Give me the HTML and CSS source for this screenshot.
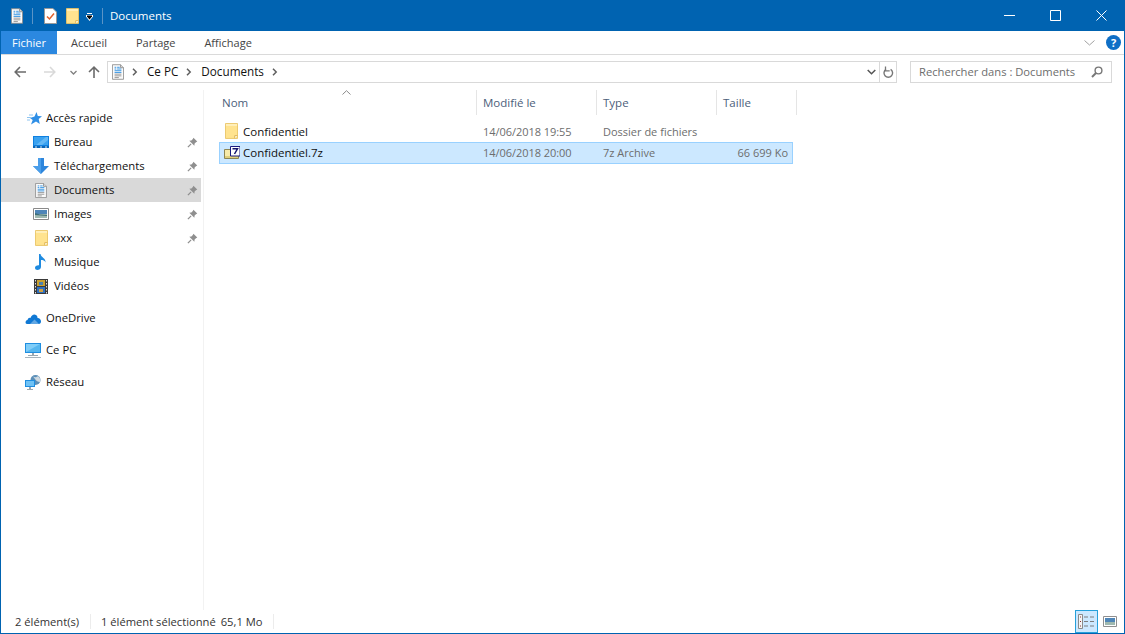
FILE: index.html
```html
<!DOCTYPE html>
<html lang="fr">
<head>
<meta charset="utf-8">
<title>Documents</title>
<link rel="stylesheet" href="styles.css">
</head>
<body>
<svg class="defs" width="0" height="0">
  <defs>
    <symbol id="doc" viewBox="0 0 14 18">
      <path d="M.5.5H10L13.500 4V17.500H.5Z" fill="#fbfbfb" stroke="#8a8a8a"/>
      <path d="M10 .5V4H13.500" fill="#ddd" stroke="#8a8a8a"/>
      <path d="M3 3.500H5M6 3.500H9M6 5.500H11M3 7.500H11M3 9.500H11" stroke="#1e88e0"/>
      <path d="M3 5.500H5" stroke="#1e88e0"/>
      <path d="M3 11.500H11M3 13.500H11M3 15.500H8" stroke="#8c8c8c"/>
    </symbol>
    <symbol id="folder" viewBox="0 0 14 17">
      <path d="M.5.5H13.500V16.500H.5Z" fill="#ffe38f" stroke="#e9c465"/>
      <path d="M1 1H13V3H1Z" fill="#fff0bd"/>
      <path d="M10.500 16.500V13.500H13.500" fill="#fff" stroke="#dcb04c"/>
    </symbol>
    <symbol id="pin" viewBox="0 0 12 12">
      <path d="M7 .8 11.200 5 9.800 5.600 8.300 7.200 8 9.500 2.500 4 4.800 3.700 6.400 2.200Z" fill="#8f8f8f"/>
      <path d="M4.500 7.500 1 11" stroke="#8f8f8f" stroke-width="1.400"/>
    </symbol>
    <symbol id="chev" viewBox="0 0 6 8">
      <path d="M1 .8 4.200 4 1 7.200" fill="none" stroke="#5f5f5f" stroke-width="1.500"/>
    </symbol>
  </defs>
</svg>
<div class="window">
  <header class="titlebar">
    <svg class="qat-doc" width="12" height="16"><use href="#doc"/></svg>
    <span class="qat-sep"></span>
    <svg class="qat-check" width="13" height="16" viewBox="0 0 13 16">
      <path d="M.5.5H9L12.500 4V15.500H.5Z" fill="#fff" stroke="#9a9a9a"/>
      <path d="M3 8.500 5.500 11 10 5.500" fill="none" stroke="#e2602a" stroke-width="1.500"/>
    </svg>
    <svg class="qat-folder" width="13" height="16"><use href="#folder"/></svg>
    <svg class="qat-drop" width="9" height="8" viewBox="0 0 9 8">
      <path d="M2 .5H7" stroke="#fff"/>
      <path d="M1 2H8V3.500L4.500 8 1 3.500Z" fill="#fff"/>
      <path d="M2 2.500H7V3.500L4.500 6.500 2 3.500Z" fill="#000"/>
    </svg>
    <span class="qat-sep second"></span>
    <span class="title">Documents</span>
    <div class="winctl">
      <svg width="11" height="11" viewBox="0 0 11 11"><path d="M0 5.500H11" stroke="#fff"/></svg>
      <svg width="11" height="11" viewBox="0 0 11 11"><path d="M.5.5H10.500V10.500H.5Z" fill="none" stroke="#fff"/></svg>
      <svg width="11" height="11" viewBox="0 0 11 11"><path d="M.5.5 10.500 10.500M10.500.5.500 10.500" stroke="#fff"/></svg>
    </div>
  </header>

  <nav class="ribbon">
    <span class="tab file">Fichier</span>
    <span class="tab t1">Accueil</span>
    <span class="tab t2">Partage</span>
    <span class="tab t3">Affichage</span>
    <svg class="rib-chev" width="11" height="6" viewBox="0 0 11 6"><path d="M.5.500 5.500 5 10.500.5" fill="none" stroke="#a0a0a0"/></svg>
    <span class="help">?</span>
  </nav>

  <div class="addr-row">
    <svg class="nb back" width="12" height="12" viewBox="0 0 12 12"><path d="M6 1 1.200 6 6 11M1.500 6H12" fill="none" stroke="#6b6b6b" stroke-width="1.600"/></svg>
    <svg class="nb fwd" width="12" height="12" viewBox="0 0 12 12"><path d="M6 1 10.800 6 6 11M10.500 6H0" fill="none" stroke="#d9d9d9" stroke-width="1.600"/></svg>
    <svg class="nb more" width="7" height="5" viewBox="0 0 7 5"><path d="M.5 1 3.500 4 6.500 1" fill="none" stroke="#808080" stroke-width="1.300"/></svg>
    <svg class="nb up" width="12" height="12" viewBox="0 0 12 12"><path d="M1 6 6 1.200 11 6M6 1.500V12" fill="none" stroke="#6b6b6b" stroke-width="1.600"/></svg>
    <div class="addr">
      <svg class="addr-doc" width="12" height="16"><use href="#doc"/></svg>
      <svg class="crumb-chev" width="6" height="8"><use href="#chev"/></svg>
      <span class="crumb">Ce PC</span>
      <svg class="crumb-chev" width="6" height="8"><use href="#chev"/></svg>
      <span class="crumb">Documents</span>
      <svg class="crumb-chev" width="6" height="8"><use href="#chev"/></svg>
      <svg class="addr-drop" width="9" height="6" viewBox="0 0 9 6"><path d="M.7 1 4.500 4.800 8.300 1" fill="none" stroke="#555" stroke-width="1.500"/></svg>
      <span class="refresh">
        <svg width="11" height="13" viewBox="0 0 11 13"><path d="M7.600 3.300A4.300 4.300 0 1 1 3 3.300" fill="none" stroke="#777" stroke-width="1.400"/><path d="M2.500 .6V4.800H6.700" fill="none" stroke="#777" stroke-width="1.300"/></svg>
      </span>
    </div>
    <div class="search">
      <span class="search-text">Rechercher dans : Documents</span>
      <svg width="12" height="12" viewBox="0 0 12 12"><circle cx="7.500" cy="4.500" r="3.400" fill="none" stroke="#777" stroke-width="1.400"/><path d="M5 7 1 11" stroke="#777" stroke-width="2"/></svg>
    </div>
  </div>

  <div class="main">
    <aside class="nav">
      <div class="item top">
        <svg class="ic star" width="15" height="13" viewBox="0 0 15 13"><path d="M9.500 0 10.800 4 15 4.300 11.700 7 12.800 12 9 9.400 4 12.500 5.700 8 3 6 7.500 4.500Z" fill="#2f8fe6"/><path d="M2 3H6M0 5.500H4M0 8H3" stroke="#8ec4f0"/></svg>
        <span>Accès rapide</span>
      </div>
      <div class="item sub">
        <svg class="ic" width="16" height="12" viewBox="0 0 16 12"><path d="M0 0H16V10H0Z" fill="#0f80e0"/><path d="M1 1H15V9H1Z" fill="#3aa2f0"/><path d="M3 9 13 1H15V4L9 9Z" fill="#64b8f5"/><path d="M0 10H16V12H0Z" fill="#0a66b8"/><path d="M2 11H4M7 11H9M12 11H14" stroke="#cde6fa"/></svg>
        <span>Bureau</span>
        <svg class="pin" width="11" height="11"><use href="#pin"/></svg>
      </div>
      <div class="item sub">
        <svg class="ic" width="16" height="16" viewBox="0 0 16 16"><path d="M5 0H11V8H16L8 16 0 8H5Z" fill="#2e86dc"/><path d="M5 0H8V16L0 8H5Z" fill="#4a9eea"/></svg>
        <span>Téléchargements</span>
        <svg class="pin" width="11" height="11"><use href="#pin"/></svg>
      </div>
      <div class="item sub active">
        <svg class="ic narrow" width="12" height="15"><use href="#doc"/></svg>
        <span>Documents</span>
        <svg class="pin" width="11" height="11"><use href="#pin"/></svg>
      </div>
      <div class="item sub">
        <svg class="ic" width="16" height="12" viewBox="0 0 16 12"><path d="M.5.5H15.500V11.500H.5Z" fill="#fff" stroke="#8a8a8a"/><path d="M2 2H14V6H2Z" fill="#4f86b8"/><path d="M2 6H14V10H2Z" fill="#9fb9b0"/><path d="M2 5 7 6.500 14 7V8L2 7Z" fill="#3e6f78"/></svg>
        <span>Images</span>
        <svg class="pin" width="11" height="11"><use href="#pin"/></svg>
      </div>
      <div class="item sub">
        <svg class="ic narrow wide13" width="13" height="16"><use href="#folder"/></svg>
        <span>axx</span>
        <svg class="pin" width="11" height="11"><use href="#pin"/></svg>
      </div>
      <div class="item sub">
        <svg class="ic narrow" width="12" height="16" viewBox="0 0 12 16"><path d="M4 0H5.500C6 3.500 11 4 10.500 8.500 9.800 6.500 8 6 6 6V13C6 15 4 16 2.500 16 1 16 0 15 0 13.700 0 12 1.700 11 4 11.200Z" fill="#1f8be0"/></svg>
        <span>Musique</span>
      </div>
      <div class="item sub">
        <svg class="ic narrow wide14" width="14" height="15" viewBox="0 0 14 15"><path d="M0 0H14V15H0Z" fill="#3a3a3a"/><path d="M1 1H2V2.500H1ZM1 4H2V5.500H1ZM1 7H2V8.500H1ZM1 10H2V11.500H1ZM1 13H2V14.500H1ZM12 1H13V2.500H12ZM12 4H13V5.500H12ZM12 7H13V8.500H12ZM12 10H13V11.500H12ZM12 13H13V14.500H12Z" fill="#ddd"/><path d="M3 1H11V7H3Z" fill="#c8a030"/><path d="M3 8H11V14H3Z" fill="#2e6fbf"/><path d="M5 3H9V6H5Z" fill="#4a80b0"/><path d="M5 10H9V13H5Z" fill="#d0a040"/></svg>
        <span>Vidéos</span>
      </div>
      <div class="item top group">
        <svg class="ic" width="16" height="11" viewBox="0 0 16 11"><path d="M2 11C0 11 0 7.500 2.500 7 3 5 4.500 4.500 5.500 5 6.500 2 9 .5 11 2 12.500 3 12.500 4 12.500 5 15 5 16 7 16 8.500 16 10 15 11 14 11Z" fill="#0f78d4"/><path d="M5 11 9.500 6.500 14 11Z" fill="#fff" opacity=".35"/></svg>
        <span>OneDrive</span>
      </div>
      <div class="item top group">
        <svg class="ic" width="16" height="15" viewBox="0 0 16 15"><path d="M0 0H16V10H0Z" fill="#1f8ee0"/><path d="M1 1H15V9H1Z" fill="#7fcdf8"/><path d="M1 9 15 1V9Z" fill="#55b6ef"/><path d="M7 10H9V12H7ZM3 12H13V13H3Z" fill="#9aa7b0"/><path d="M0 14H16V15H0Z" fill="#a8b4bc"/></svg>
        <span>Ce PC</span>
      </div>
      <div class="item top group">
        <svg class="ic" width="16" height="15" viewBox="0 0 16 15"><circle cx="10.500" cy="5" r="5" fill="#5b8fb8"/><path d="M8 1.500C10 3 12 2 13 1 15 3 16 5 15 7 13 7 11 6 10 4Z" fill="#cfd9e0"/><path d="M0 5H10V12H0Z" fill="#1f8ee0"/><path d="M1 6H9V11H1Z" fill="#6fc2f5"/><path d="M4 12H6V14H4ZM2 14H8V15H2Z" fill="#9aa7b0"/></svg>
        <span>Réseau</span>
      </div>
    </aside>

    <section class="content">
      <div class="cols">
        <div class="col c-name">Nom
          <svg class="sort" width="9" height="5" viewBox="0 0 9 5"><path d="M.5 4.500 4.500.7 8.500 4.500" fill="none" stroke="#8a8a8a"/></svg>
        </div>
        <div class="col c-date">Modifié le</div>
        <div class="col c-type">Type</div>
        <div class="col c-size">Taille</div>
      </div>
      <div class="row">
        <div class="cell c-name name">
          <svg class="file-ic folder-ic" width="13" height="16"><use href="#folder"/></svg>
          <span>Confidentiel</span>
        </div>
        <div class="cell c-date">14/06/2018 19:55</div>
        <div class="cell c-type">Dossier de fichiers</div>
        <div class="cell c-size"></div>
      </div>
      <div class="row selected">
        <div class="cell c-name name">
          <svg class="file-ic" width="16" height="14" viewBox="0 0 16 14"><path d="M.5 3.500H14.500V12.500H.5Z" fill="#f7eaa8" stroke="#8d8554"/><path d="M1 10H14V12H1Z" fill="#e0cf7a"/><path d="M6.500.5H16V10H6.500Z" fill="#fff" stroke="#1a1a80"/><path d="M8.500 2.800H13.500L10.500 8" fill="none" stroke="#14146e" stroke-width="1.500"/></svg>
          <span>Confidentiel.7z</span>
        </div>
        <div class="cell c-date">14/06/2018 20:00</div>
        <div class="cell c-type">7z Archive</div>
        <div class="cell c-size">66 699 Ko</div>
      </div>
    </section>
  </div>

  <footer class="status">
    <span class="st-count">2 élément(s)</span>
    <span class="st-sel">1 élément sélectionné</span>
    <span class="st-size">65,1 Mo</span>
    <div class="views">
      <span class="view on">
        <svg width="17" height="15" viewBox="0 0 17 15"><path d="M.5.5H4.500V14.500H.5Z" fill="#f4f4f4" stroke="#8a8a8a"/><path d="M2 2.500H3V3.500H2ZM2 7H3V8H2ZM2 11.500H3V12.500H2Z" fill="#8a3030"/><path d="M6 3H10M12 3H16M6 7.500H10M12 7.500H16M6 12H10M12 12H16" stroke="#7d7d7d"/></svg>
      </span>
      <span class="view">
        <svg width="14" height="11" viewBox="0 0 14 11"><path d="M.5.500H13.500V10.500H.5Z" fill="#fff" stroke="#8f8f8f"/><path d="M2 2H12V6H2Z" fill="#4f86b8"/><path d="M2 6H12V9H2Z" fill="#9fb9b0"/></svg>
      </span>
    </div>
  </footer>
</div>
</body>
</html>
```

FILE: styles.css
```css
* { box-sizing: border-box; }
html, body { margin: 0; padding: 0; height: 100%; overflow: hidden; }
body {
  font-family: "Open Sans", "Noto Sans", "Liberation Sans", sans-serif;
  font-size: 11.2px;
  color: #111;
  background: #fff;
}
.defs { display: block; height: 0; }
svg { display: block; flex: none; }

.window {
  display: flex;
  flex-direction: column;
  width: 1125px;
  height: 634px;
  border: 1px solid #0063b1;
  border-top: 0;
}

/* title bar */
.titlebar {
  display: flex;
  align-items: center;
  height: 31px;
  flex: none;
  margin-left: -1px;
  margin-right: -1px;
  background: #0063b1;
  color: #fff;
  padding-left: 11px;
}
.qat-doc { margin-right: 9px; }
.qat-sep { width: 1px; height: 16px; background: #5b94c6; }
.qat-check { margin-left: 11px; }
.qat-folder { margin-left: 9px; }
.qat-drop { margin-left: 6px; margin-top: 2px; }
.qat-sep.second { margin-left: 8px; }
.title { margin-left: 7px; font-size: 11.5px; }
.winctl {
  margin-left: auto;
  display: flex;
  align-items: center;
  gap: 35px;
  padding-right: 18px;
}

/* ribbon */
.ribbon {
  display: flex;
  align-items: center;
  height: 24px;
  flex: none;
  border-bottom: 1px solid #dadada;
  color: #444;
  font-size: 11px;
}
.tab { display: flex; align-items: center; height: 23px; }
.tab.file {
  width: 56px;
  background: #2b88e0;
  color: #fff;
  justify-content: center;
}
.tab.t1 { margin-left: 14px; }
.tab.t2 { margin-left: 29px; }
.tab.t3 { margin-left: 29px; }
.rib-chev { margin-left: auto; margin-right: 11px; }
.help {
  width: 15px;
  height: 15px;
  margin-right: 3px;
  border-radius: 50%;
  background: #0f6fc6;
  color: #fff;
  font-weight: 700;
  font-size: 11px;
  line-height: 15px;
  text-align: center;
}

/* address row */
.addr-row {
  display: flex;
  align-items: center;
  height: 35px;
  flex: none;
  padding-bottom: 1px;
}
.nb.back { margin-left: 13px; }
.nb.fwd { margin-left: 18px; }
.nb.more { margin-left: 14px; }
.nb.up { margin-left: 11px; }
.addr {
  display: flex;
  align-items: center;
  width: 790px;
  height: 22px;
  margin-left: 7px;
  border: 1px solid #d9d9d9;
  font-size: 11.7px;
}
.crumb { padding-bottom: 2px; }
.addr-doc { margin-left: 4px; }
.crumb-chev { margin: 0 9px 0 8px; }
.addr-drop { margin-left: auto; margin-right: 3px; }
.refresh {
  display: flex;
  align-items: center;
  justify-content: center;
  width: 17px;
  height: 20px;
  border-left: 1px solid #d9d9d9;
}
.search {
  display: flex;
  align-items: center;
  justify-content: space-between;
  width: 202px;
  height: 22px;
  margin-left: 13px;
  padding: 0 8px;
  border: 1px solid #d9d9d9;
  color: #6d6d6d;
}
.search-text { padding-bottom: 2px; }

/* main */
.main { display: flex; flex: 1; min-height: 0; }
.nav {
  width: 203px;
  flex: none;
  padding-top: 16px;
  padding-right: 2px;
  border-right: 1px solid #f2f2f2;
}
.item {
  display: flex;
  align-items: center;
  height: 24px;
  padding-right: 2px;
  font-size: 11.3px;
}
.item > span { padding-bottom: 2px; }
.item.top { padding-left: 24px; }
.item.top .ic { margin-right: 5px; }
.item.top .ic.star { margin-left: 2px; margin-right: 4px; }
.item.sub { padding-left: 32px; }
.item.sub .ic { margin-right: 5px; }
.item.sub .ic.narrow { margin-left: 2px; margin-right: 7px; }
.item.sub .ic.wide13 { margin-right: 6px; }
.item.sub .ic.wide14 { margin-left: 1px; margin-right: 6px; }
.item.group { margin-top: 8px; }
.item.active { background: #d9d9d9; }
.pin { margin-left: auto; margin-right: 1px; }

.content { flex: 1; min-width: 0; padding-left: 14px; }
.cols { display: flex; height: 25px; color: #4c607a; font-size: 11.5px; }
.col {
  display: flex;
  align-items: center;
  padding-left: 6px;
  border-right: 1px solid #e5e5e5;
  position: relative;
}
.sort { position: absolute; left: 124px; top: 0; }
.c-name { width: 259px; flex: none; padding-left: 4px; }
.c-date { width: 120px; flex: none; }
.c-type { width: 120px; flex: none; }
.c-size { width: 80px; flex: none; }
.row {
  display: flex;
  align-items: center;
  width: 574px;
  height: 21px;
  margin-left: 1px;
  color: #6d6d6d;
  border: 1px solid transparent;
  font-size: 11px;
}
.cols + .row { margin-top: 6px; }
.row.selected {
  height: 22px;
  background: #cce8ff;
  border-color: #99d1ff;
}
.cell { padding-left: 6px; padding-bottom: 1px; }
.cell.c-name { width: 257px; padding-left: 4px; }
.cell.name { display: flex; align-items: center; color: #111; font-size: 11.5px; }
.cell.c-date { letter-spacing: -0.05px; }
.row .c-size { text-align: right; padding-left: 0; padding-right: 5px; width: 76px; }
.file-ic { margin-right: 3px; }
.folder-ic { margin-left: 1px; margin-right: 5px; }

/* status */
.status {
  display: flex;
  align-items: center;
  height: 23px;
  flex: none;
  color: #333;
}
.st-count { margin-left: 14px; width: 76px; border-right: 1px solid #ececec; }
.st-sel { margin-left: 10px; }
.st-size { margin-left: 5px; width: 53px; border-right: 1px solid #ececec; }
.views { margin-left: auto; display: flex; align-items: center; margin-right: 3px; }
.view {
  display: flex;
  align-items: center;
  justify-content: center;
  width: 23px;
  height: 23px;
  border: 1px solid transparent;
}
.view.on { background: #cce8ff; border-color: #26a0da; }
```
